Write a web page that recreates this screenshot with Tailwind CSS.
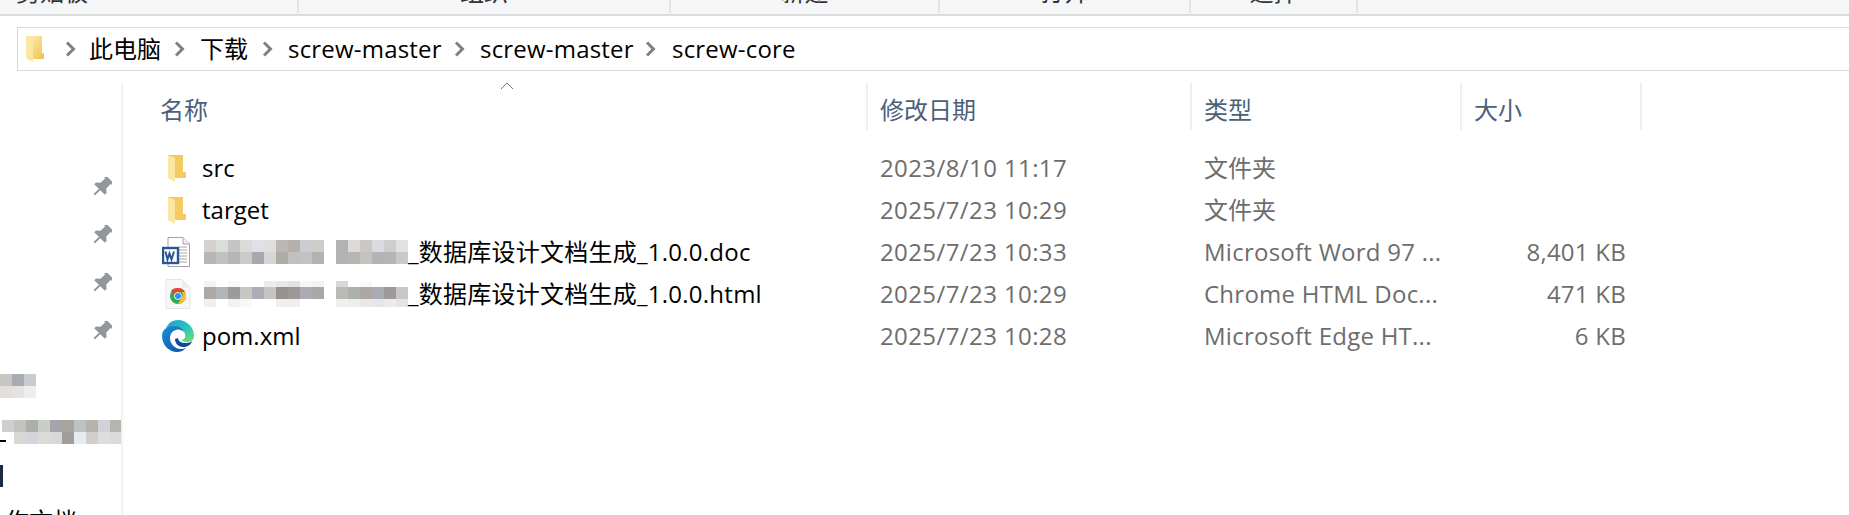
<!DOCTYPE html>
<html lang="zh-CN">
<head>
    <meta charset="UTF-8">
    <title>screw-core</title>
    <script src="https://cdn.jsdelivr.net/npm/@tailwindcss/browser@4"></script>
</head>
<body class="relative h-[515px] w-[1849px] overflow-hidden bg-white font-['Open_Sans','Noto_Sans_CJK_SC',sans-serif] text-[24px] text-black">
    <!-- ribbon, only the bottom of the labels is visible -->
    <div class="flex h-[16px] items-start overflow-hidden border-b-2 border-[#dcdcdc] bg-[#f5f6f7] text-[#333]">
        <div class="flex h-[13px] w-[299px] items-end justify-start overflow-hidden border-r-2 border-[#e2e3e5] pb-[9px] pl-[16px]"><span class="leading-[24px]">剪贴板</span></div>
        <div class="flex h-[13px] w-[372px] items-end justify-center overflow-hidden border-r-2 border-[#e2e3e5] pb-[9px]"><span class="leading-[24px]">组织</span></div>
        <div class="flex h-[13px] w-[269px] items-end justify-center overflow-hidden border-r-2 border-[#e2e3e5] pb-[9px]"><span class="leading-[24px]">新建</span></div>
        <div class="flex h-[13px] w-[251px] items-end justify-center overflow-hidden border-r-2 border-[#e2e3e5] pb-[9px]"><span class="leading-[24px]">打开</span></div>
        <div class="flex h-[13px] w-[167px] items-end justify-center overflow-hidden border-r-2 border-[#e2e3e5] pb-[9px]"><span class="leading-[24px]">选择</span></div>
    </div>

    <!-- address bar -->
    <div class="ml-[17px] mt-[11px] flex h-[44px] items-center border border-r-0 border-[#d9d9d9] pl-[7px]">
        <svg class="h-[28px] w-[20px]" viewBox="0 0 20 28">
            <defs><linearGradient id="fa" x1="0" x2="1" y1="0" y2="1"><stop offset="0" stop-color="#fff0b8"/><stop offset="1" stop-color="#f2c14e"/></linearGradient></defs>
            <path d="M1 1h16v17h2v6H8l-7-2z" fill="url(#fa)"/>
            <path d="M1 1l7 3v23l-7-4z" fill="#fbe6a2"/>
        </svg>
        <svg class="ml-[20px] h-[16px] w-[11px]" viewBox="0 0 11 16"><path d="M2 1.500l6.500 6.500-6.500 6.500" fill="none" stroke="#808080" stroke-width="3"/></svg>
        <span class="ml-[13px] w-[73px]">此电脑</span>
        <svg class="ml-[12px] h-[16px] w-[11px]" viewBox="0 0 11 16"><path d="M2 1.500l6.500 6.500-6.500 6.500" fill="none" stroke="#808080" stroke-width="3"/></svg>
        <span class="ml-[15px] w-[48px]">下载</span>
        <svg class="ml-[14px] h-[16px] w-[11px]" viewBox="0 0 11 16"><path d="M2 1.500l6.500 6.500-6.500 6.500" fill="none" stroke="#808080" stroke-width="3"/></svg>
        <span class="ml-[15px] w-[153px] whitespace-nowrap tracking-[.2px]">screw-master</span>
        <svg class="ml-[13px] h-[16px] w-[11px]" viewBox="0 0 11 16"><path d="M2 1.500l6.500 6.500-6.500 6.500" fill="none" stroke="#808080" stroke-width="3"/></svg>
        <span class="ml-[15px] w-[153px] whitespace-nowrap tracking-[.2px]">screw-master</span>
        <svg class="ml-[12px] h-[16px] w-[11px]" viewBox="0 0 11 16"><path d="M2 1.500l6.500 6.500-6.500 6.500" fill="none" stroke="#808080" stroke-width="3"/></svg>
        <span class="ml-[16px] whitespace-nowrap tracking-[.2px]">screw-core</span>
    </div>

    <div class="mt-[12px] flex">
        <!-- navigation pane -->
        <div class="flex h-[432px] w-[123px] shrink-0 flex-col overflow-hidden border-r-2 border-[#f2f2f2] *:shrink-0">
            <div class="flex flex-col items-end gap-[28px] pr-[9px] pt-[94px]">
                <svg class="h-[20px] w-[20px]" viewBox="0 0 20 20"><g transform="rotate(45 10 10)"><path d="M4-1h12v2.500h-2v6.500l3.500 3v2.500h-15v-2.500l3.500-3v-6.500h-2zM9 13h2v8h-2z" fill="#8f979e"/></g></svg>
                <svg class="h-[20px] w-[20px]" viewBox="0 0 20 20"><g transform="rotate(45 10 10)"><path d="M4-1h12v2.500h-2v6.500l3.500 3v2.500h-15v-2.500l3.500-3v-6.500h-2zM9 13h2v8h-2z" fill="#8f979e"/></g></svg>
                <svg class="h-[20px] w-[20px]" viewBox="0 0 20 20"><g transform="rotate(45 10 10)"><path d="M4-1h12v2.500h-2v6.500l3.500 3v2.500h-15v-2.500l3.500-3v-6.500h-2zM9 13h2v8h-2z" fill="#8f979e"/></g></svg>
                <svg class="h-[20px] w-[20px]" viewBox="0 0 20 20"><g transform="rotate(45 10 10)"><path d="M4-1h12v2.500h-2v6.500l3.500 3v2.500h-15v-2.500l3.500-3v-6.500h-2zM9 13h2v8h-2z" fill="#8f979e"/></g></svg>
            </div>
            <div class="mt-[33px] grid grid-cols-[repeat(3,12px)] auto-rows-[12px]">
                <div class="bg-[#c8c5c2]"></div><div class="bg-[#a8abaf]"></div><div class="bg-[#c8ccd0]"></div>
                <div class="bg-[#e2dfdd]"></div><div class="bg-[#e2e3e5]"></div><div class="bg-[#eeeeee]"></div>
            </div>
            <div class="mt-[22px] grid grid-cols-[repeat(10,12px)] auto-rows-[12px] pl-[2px]">
                <div class="bg-[#cfcfcf]"></div><div class="bg-[#c4c2c0]"></div><div class="bg-[#adada9]"></div><div class="bg-[#c9cec9]"></div><div class="bg-[#a5a3ab]"></div><div class="bg-[#a8a39d]"></div><div class="bg-[#bdc1c6]"></div><div class="bg-[#b5b1ab]"></div><div class="bg-[#cfd2da]"></div><div class="bg-[#b6b4b0]"></div>
                <div class="bg-white"></div><div class="bg-[#d9d7d4]"></div><div class="bg-[#d4d5d9]"></div><div class="bg-[#dbdad7]"></div><div class="bg-[#d8d8dc]"></div><div class="bg-[#a19d9a]"></div><div class="bg-[#e7eaee]"></div><div class="bg-[#d2cfca]"></div><div class="bg-[#dddddd]"></div><div class="bg-[#d9dadc]"></div>
            </div>
            <div class="-mt-[4px] h-[2px] w-[6px] bg-black"></div>
            <div class="mt-[23px] h-[22px] w-[3px] bg-[#1a2a44]"></div>
            <div class="mt-[22px] whitespace-nowrap pl-[5px] leading-[24px]">作文档</div>
        </div>

        <!-- file list -->
        <div class="relative w-[1519px]">
            <svg class="absolute left-[377px] -top-[1px] h-[8px] w-[14px]" viewBox="0 0 14 8"><path d="M1 7l6-6 6 6" fill="none" stroke="#777" stroke-width="1"/></svg>
            <div class="grid h-[47px] grid-cols-[745px_324px_270px_180px] items-stretch text-[#4c607a]">
                <div class="border-r-2 border-[#efefef] pl-[37px] pt-[9px]">名称</div>
                <div class="border-r-2 border-[#efefef] pl-[12px] pt-[9px]">修改日期</div>
                <div class="border-r-2 border-[#efefef] pl-[12px] pt-[9px]">类型</div>
                <div class="border-r-2 border-[#efefef] pl-[12px] pt-[9px]">大小</div>
            </div>

            <div class="mt-[17px] flex flex-col">
                <div class="grid h-[42px] grid-cols-[745px_324px_270px_180px] items-center">
                    <div class="flex items-center pl-[44px]">
                        <svg class="h-[27px] w-[20px]" viewBox="0 0 20 27"><path d="M1 0h15v17h3v6H8l-7-2z" fill="#f4cb62"/><path d="M1 0l7 3v24l-7-4z" fill="#fbe6a2"/></svg>
                        <span class="ml-[15px]">src</span>
                    </div>
                    <div class="pl-[12px] tracking-[.4px] text-[#6d6d6d]">2023/8/10 11:17</div>
                    <div class="pl-[12px] text-[#6d6d6d]">文件夹</div>
                    <div></div>
                </div>
                <div class="grid h-[42px] grid-cols-[745px_324px_270px_180px] items-center">
                    <div class="flex items-center pl-[44px]">
                        <svg class="h-[27px] w-[20px]" viewBox="0 0 20 27"><path d="M1 0h15v17h3v6H8l-7-2z" fill="#f4cb62"/><path d="M1 0l7 3v24l-7-4z" fill="#fbe6a2"/></svg>
                        <span class="ml-[15px]">target</span>
                    </div>
                    <div class="pl-[12px] tracking-[.4px] text-[#6d6d6d]">2025/7/23 10:29</div>
                    <div class="pl-[12px] text-[#6d6d6d]">文件夹</div>
                    <div></div>
                </div>
                <div class="grid h-[42px] grid-cols-[745px_324px_270px_180px] items-center">
                    <div class="flex items-center pl-[39px]">
                        <svg class="h-[30px] w-[28px]" viewBox="0 0 28 30">
                            <path d="M6 .5h15l6.500 6.500v22.500H6z" fill="#fff" stroke="#a3a3a3"/>
                            <path d="M21 .5v6.500h6.500" fill="#eee" stroke="#a3a3a3"/>
                            <path d="M17 10h8M17 13h8M17 16h8M17 19h8M17 22h8M17 25h8" stroke="#a8a8a8"/>
                            <rect x="1" y="11" width="15" height="15" fill="#fff" stroke="#2a5699" stroke-width="2.400"/>
                            <path d="M3.500 14.500l2 8 2-6 2 6 2.500-8" fill="none" stroke="#2a5699" stroke-width="2"/>
                        </svg>
                        <div class="ml-[14px] grid grid-cols-[repeat(10,12px)_12px_repeat(6,12px)] auto-rows-[12px]">
                            <div class="bg-[#d4d1ce]"></div><div class="bg-[#dcdddb]"></div><div class="bg-[#c6c5c3]"></div><div class="bg-[#dcdbd8]"></div><div class="bg-[#e0e1e5]"></div><div class="bg-[#dddedd]"></div><div class="bg-[#b9b8b5]"></div><div class="bg-[#b5b0ac]"></div><div class="bg-[#cccdd1]"></div><div class="bg-[#cdcdce]"></div><div></div><div class="bg-[#b2b3b0]"></div><div class="bg-[#dcdbdb]"></div><div class="bg-[#cbc7c4]"></div><div class="bg-[#dadbde]"></div><div class="bg-[#cfcecf]"></div><div class="bg-[#e1e1e0]"></div>
                            <div class="bg-[#b8b5b3]"></div><div class="bg-[#bfc1c3]"></div><div class="bg-[#b8b5b5]"></div><div class="bg-[#cccbc8]"></div><div class="bg-[#a8a8b0]"></div><div class="bg-[#d6d6d6]"></div><div class="bg-[#afaba6]"></div><div class="bg-[#c3bfbf]"></div><div class="bg-[#c0c2c6]"></div><div class="bg-[#b3b2b0]"></div><div></div><div class="bg-[#b3b4b2]"></div><div class="bg-[#b6b7b5]"></div><div class="bg-[#c6c2be]"></div><div class="bg-[#b1b3b7]"></div><div class="bg-[#b8b3b5]"></div><div class="bg-[#c8cac8]"></div>
                        </div>
                        <span class="whitespace-nowrap tracking-[.25px]">_数据库设计文档生成_1.0.0.doc</span>
                    </div>
                    <div class="pl-[12px] tracking-[.4px] text-[#6d6d6d]">2025/7/23 10:33</div>
                    <div class="pl-[12px] tracking-[.25px] text-[#6d6d6d]">Microsoft Word 97 ...</div>
                    <div class="pr-[16px] text-right tracking-[.25px] text-[#6d6d6d]">8,401 KB</div>
                </div>
                <div class="grid h-[42px] grid-cols-[745px_324px_270px_180px] items-center">
                    <div class="flex items-center pl-[42px]">
                        <svg class="h-[30px] w-[26px]" viewBox="0 0 26 30">
                            <path d="M1 .5h16l8 8v21H1z" fill="#f7f7f7" stroke="#e4e4e4"/>
                            <path d="M17 .5v8h8" fill="#ececec"/>
                            <circle cx="13" cy="17" r="8" fill="#34a853"/>
                            <path d="M13 9a8 8 0 0 1 7 4H13a4 4 0 0 0-3.500 2L6 11.500A8 8 0 0 1 13 9z" fill="#ea4335"/>
                            <path d="M20 13a8 8 0 0 1-7 12l3.500-6a4 4 0 0 0 0-6z" fill="#fbc02d"/>
                            <circle cx="13" cy="17" r="3.800" fill="#fff"/>
                            <circle cx="13" cy="17" r="3" fill="#4285f4"/>
                        </svg>
                        <div class="ml-[13px] grid grid-cols-[repeat(10,12px)_12px_repeat(6,12px)] [grid-template-rows:6px_12px_8px]">
                            <div class="bg-[#f4f3f2]"></div><div class="bg-white"></div><div class="bg-[#f8f8f8]"></div><div class="bg-white"></div><div class="bg-white"></div><div class="bg-[#ececec]"></div><div class="bg-[#e8e7e6]"></div><div class="bg-[#e4e3e2]"></div><div class="bg-[#f6f7f9]"></div><div class="bg-[#f2f2f2]"></div><div></div><div class="bg-[#d8d8d8]"></div><div class="bg-white"></div><div class="bg-[#f8f8f8]"></div><div class="bg-white"></div><div class="bg-white"></div><div class="bg-white"></div>
                            <div class="bg-[#adaaa5]"></div><div class="bg-[#b3b6b6]"></div><div class="bg-[#9c9b9b]"></div><div class="bg-[#c6c7c0]"></div><div class="bg-[#adadb9]"></div><div class="bg-[#c6c5c4]"></div><div class="bg-[#96928d]"></div><div class="bg-[#9d9896]"></div><div class="bg-[#ababb3]"></div><div class="bg-[#a8a8aa]"></div><div></div><div class="bg-[#b8bab6]"></div><div class="bg-[#aeb0ae]"></div><div class="bg-[#aea8a4]"></div><div class="bg-[#a8abb3]"></div><div class="bg-[#9e9a9b]"></div><div class="bg-[#c6c7c8]"></div>
                            <div class="bg-[#f0f0f0]"></div><div class="bg-white"></div><div class="bg-[#f2f2f2]"></div><div class="bg-[#f8f8f8]"></div><div class="bg-white"></div><div class="bg-white"></div><div class="bg-[#f0efee]"></div><div class="bg-[#f0efef]"></div><div class="bg-white"></div><div class="bg-white"></div><div></div><div class="bg-[#f0f0f0]"></div><div class="bg-[#ededed]"></div><div class="bg-[#e8e8e8]"></div><div class="bg-[#e6e6e6]"></div><div class="bg-[#ebebeb]"></div><div class="bg-[#e4e4e4]"></div>
                        </div>
                        <span class="whitespace-nowrap tracking-[.25px]">_数据库设计文档生成_1.0.0.html</span>
                    </div>
                    <div class="pl-[12px] tracking-[.4px] text-[#6d6d6d]">2025/7/23 10:29</div>
                    <div class="pl-[12px] tracking-[.25px] text-[#6d6d6d]">Chrome HTML Doc...</div>
                    <div class="pr-[16px] text-right tracking-[.25px] text-[#6d6d6d]">471 KB</div>
                </div>
                <div class="grid h-[42px] grid-cols-[745px_324px_270px_180px] items-center">
                    <div class="flex items-center pl-[39px]">
                        <svg class="h-[32px] w-[32px]" viewBox="0 0 32 32">
                            <defs>
                                <linearGradient id="eg" x1="0" x2="1" y1="0" y2="1"><stop offset="0" stop-color="#1d9fd8"/><stop offset=".6" stop-color="#2fc7b6"/><stop offset="1" stop-color="#7fe05c"/></linearGradient>
                                <linearGradient id="eb" x1="0" x2="1" y1="0" y2="1"><stop offset="0" stop-color="#1b8fe0"/><stop offset="1" stop-color="#0c4f9e"/></linearGradient>
                            </defs>
                            <path d="M16 0a16 16 0 0 1 16 16c0 4-3 6-7 6-3 0-5-1-5-2 3-1 4-3 3-6-1-4-5-6-9-5C8 10 5 12 4 16 2 9 6 0 16 0z" fill="url(#eg)"/>
                            <path d="M0 16C0 9 6 6 12 6c5 0 9 3 10 6-2-2-5-3-8-2-4 1-6 4-6 8 0 6 5 11 11 11 2 0 4-.5 5-1-3 3-6 4-9 4C7 32 0 25 0 16z" fill="url(#eb)"/>
                            <path d="M13 19c0 4 3 8 8 8 4 0 8-2 9-6-1 1-3 2-6 2-5 0-8-2-8-5z" fill="#114a94"/>
                        </svg>
                        <span class="ml-[8px]">pom.xml</span>
                    </div>
                    <div class="pl-[12px] tracking-[.4px] text-[#6d6d6d]">2025/7/23 10:28</div>
                    <div class="pl-[12px] tracking-[.25px] text-[#6d6d6d]">Microsoft Edge HT...</div>
                    <div class="pr-[16px] text-right tracking-[.25px] text-[#6d6d6d]">6 KB</div>
                </div>
            </div>
        </div>
    </div>
</body>
</html>
